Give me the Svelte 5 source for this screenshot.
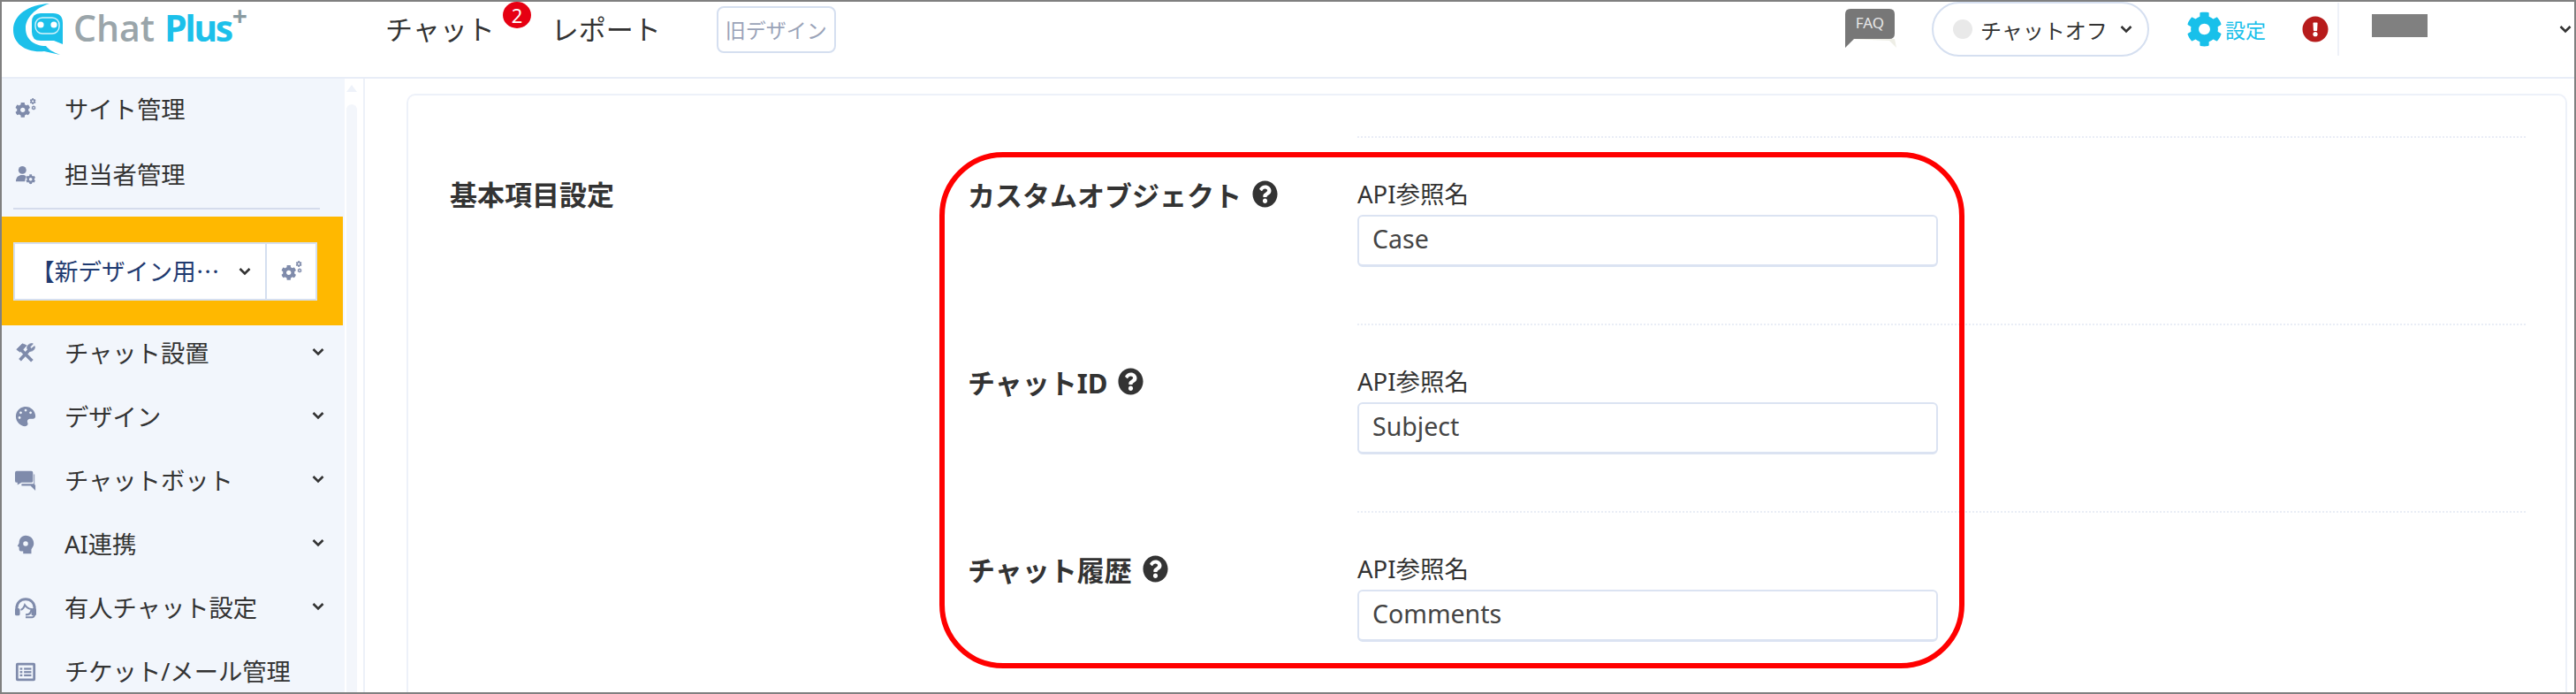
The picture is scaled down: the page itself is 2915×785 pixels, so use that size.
<script>
	const topItems = [
		{ label: 'サイト管理', icon: 'cogs' },
		{ label: '担当者管理', icon: 'usercog' }
	];
	const menuItems = [
		{ label: 'チャット設置', icon: 'tools', caret: true },
		{ label: 'デザイン', icon: 'palette', caret: true },
		{ label: 'チャットボット', icon: 'comments', caret: true },
		{ label: 'AI連携', icon: 'head', caret: true },
		{ label: '有人チャット設定', icon: 'agent', caret: true },
		{ label: 'チケット/メール管理', icon: 'list', caret: false }
	];
	const fields = [
		{ label: 'カスタムオブジェクト', value: 'Case' },
		{ label: 'チャットID', value: 'Subject' },
		{ label: 'チャット履歴', value: 'Comments' }
	];
	const gear =
		'M487.4 315.7l-42.6-24.6c4.3-23.2 4.3-47 0-70.2l42.6-24.6c4.9-2.8 7.1-8.6 5.5-14-11.1-35.6-30-67.8-54.7-94.6-3.8-4.1-10-5.1-14.8-2.3L380.8 110c-17.9-15.4-38.5-27.3-60.8-35.1V25.8c0-5.6-3.9-10.5-9.4-11.7-36.7-8.2-74.3-7.8-109.2 0-5.5 1.2-9.4 6.1-9.4 11.7V75c-22.2 7.9-42.8 19.8-60.8 35.1L88.7 85.5c-4.9-2.8-11-1.9-14.8 2.3-24.7 26.7-43.6 58.9-54.7 94.6-1.7 5.4.6 11.2 5.5 14L67.3 221c-4.3 23.2-4.3 47 0 70.2l-42.6 24.6c-4.9 2.8-7.1 8.6-5.5 14 11.1 35.6 30 67.8 54.7 94.6 3.8 4.1 10 5.1 14.8 2.3l42.6-24.6c17.9 15.4 38.5 27.3 60.8 35.1v49.2c0 5.6 3.9 10.5 9.4 11.7 36.7 8.2 74.3 7.8 109.2 0 5.5-1.2 9.4-6.1 9.4-11.7v-49.2c22.2-7.9 42.8-19.8 60.8-35.1l42.6 24.6c4.9 2.8 11 1.9 14.8-2.3 24.7-26.7 43.6-58.9 54.7-94.6 1.5-5.5-.7-11.3-5.6-14.1zM256 336c-44.1 0-80-35.9-80-80s35.9-80 80-80 80 35.9 80 80-35.9 80-80 80z';
	const help =
		'M504 256c0 136.997-111.043 248-248 248S8 392.997 8 256C8 119.083 119.043 8 256 8s248 111.083 248 248zM262.655 90c-54.497 0-89.255 22.957-116.549 63.758-3.536 5.286-2.353 12.415 2.715 16.258l34.699 26.31c5.205 3.947 12.621 3.008 16.665-2.122 17.864-22.658 30.113-35.797 57.303-35.797 20.429 0 45.698 13.148 45.698 32.958 0 14.976-12.363 22.667-32.534 33.976C247.128 238.528 216 254.941 216 296v4c0 6.627 5.373 12 12 12h56c6.627 0 12-5.373 12-12v-1.333c0-28.462 83.186-29.647 83.186-106.667 0-58.002-60.165-102-116.531-102zM256 338c-25.365 0-46 20.635-46 46 0 25.364 20.635 46 46 46s46-20.636 46-46c0-25.365-20.635-46-46-46z';
	const alert =
		'M504 256c0 136.997-111.043 248-248 248S8 392.997 8 256C8 119.083 119.043 8 256 8s248 111.083 248 248zm-248 50c-25.405 0-46 20.595-46 46s20.595 46 46 46 46-20.595 46-46-20.595-46-46-46zm-43.673-165.346l7.418 136c.347 6.364 5.609 11.346 11.982 11.346h48.546c6.373 0 11.635-4.982 11.982-11.346l7.418-136c.375-6.874-5.098-12.654-11.982-12.654h-63.383c-6.884 0-12.356 5.78-11.981 12.654z';
	const palette =
		'M204.3 5C104.9 24.4 24.8 104.3 5.2 203.4c-37 187 131.7 326.4 258.8 306.7 41.2-6.4 61.4-54.6 42.5-91.7-23.1-45.4 9.9-98.4 60.9-98.4h79.7c35.8 0 64.8-29.6 64.9-65.3C511.5 97.1 368.1-26.9 204.3 5zM96 320c-17.7 0-32-14.3-32-32s14.3-32 32-32 32 14.3 32 32-14.3 32-32 32zm32-128c-17.7 0-32-14.3-32-32s14.3-32 32-32 32 14.3 32 32-14.3 32-32 32zm128-64c-17.7 0-32-14.3-32-32s14.3-32 32-32 32 14.3 32 32-14.3 32-32 32zm128 64c-17.7 0-32-14.3-32-32s14.3-32 32-32 32 14.3 32 32-14.3 32-32 32z';
</script>

{#snippet chevron()}
	<svg class="chevron" viewBox="0 0 14 10" aria-hidden="true">
		<path d="M1.5 2 L7 7.5 L12.5 2" fill="none" stroke="#333" stroke-width="2.6" />
	</svg>
{/snippet}

{#snippet menuIcon(name)}
	<svg class="menu-icon" viewBox="0 0 26 26" aria-hidden="true">
		{#if name === 'cogs'}
			<g fill="#7f8bab">
				<path transform="translate(0 5) scale(0.037)" d={gear} />
				<path transform="translate(18 0) scale(0.015)" d={gear} />
				<path transform="translate(20 9) scale(0.011)" d={gear} />
			</g>
		{:else if name === 'usercog'}
			<g fill="#7f8bab">
				<circle cx="9" cy="8" r="4.8" />
				<path d="M1 22 C1 16 5 14 9 14 C11 14 12.5 14.5 13.5 15.5 L12 22 Z" />
				<path transform="translate(13 13) scale(0.024)" d={gear} />
			</g>
		{:else if name === 'tools'}
			<g fill="none" stroke="#7f8bab">
				<path d="M6 8 L21 23" stroke-width="4" />
				<path d="M2 9 L9 2 L14 4 L9 10 L6 12 Z" fill="#7f8bab" stroke-width="1" />
				<path d="M6 22 L18 9" stroke-width="4" />
				<path d="M15 8 C14 4 18 1 22 2 L18.5 6 L20 8 L24 5 C25 9 21 12 17 11 Z" fill="#7f8bab" stroke-width="1" />
			</g>
		{:else if name === 'palette'}
			<path transform="translate(1 1) scale(0.047)" d={palette} fill="#7f8bab" />
		{:else if name === 'comments'}
			<g fill="#7f8bab">
				<path d="M2 2 H20 Q22 2 22 4 V14 Q22 16 20 16 H8 L3 19 V16 H2 Q0 16 0 14 V4 Q0 2 2 2 Z" />
				<path d="M24 6 V19 H25 V26 L19 20 H8 V17.5 H23 V6 Z" />
			</g>
		{:else if name === 'head'}
			<path
				fill="#7f8bab"
				fill-rule="evenodd"
				d="M13 2 C19 2 23 6 23 12 C23 15 21 17 20 19 V24 H10 V21 H7 Q5 21 5 19 V16 L3 15 L5 11 C5 6 8 2 13 2 Z M13 9 A3 3 0 1 0 13 15 A3 3 0 1 0 13 9 Z"
			/>
		{:else if name === 'agent'}
			<g fill="none" stroke="#7f8bab" stroke-width="3.2">
				<path d="M2 18 V13 C2 6 7 2 13 2 C19 2 24 6 24 13 V18" />
				<path d="M7 15 C10 14 11 12 12 9 C14 12 17 14 20 14 C20 19 17 21 13 21" stroke-width="2.2" />
				<path d="M13 24 H21 Q24 24 24 19" stroke-width="2.2" />
			</g>
			<rect x="0" y="13" width="6" height="9" rx="2" fill="#7f8bab" />
			<rect x="20" y="13" width="6" height="9" rx="2" fill="#7f8bab" />
		{:else}
			<g fill="#7f8bab">
				<path fill-rule="evenodd" d="M3 2 H23 Q25 2 25 4 V22 Q25 24 23 24 H3 Q1 24 1 22 V4 Q1 2 3 2 Z M4 5 V21 H22 V5 Z" />
				<rect x="6" y="8" width="3" height="2.4" />
				<rect x="11" y="8" width="9" height="2.4" />
				<rect x="6" y="12" width="3" height="2.4" />
				<rect x="11" y="12" width="9" height="2.4" />
				<rect x="6" y="16" width="3" height="2.4" />
				<rect x="11" y="16" width="9" height="2.4" />
			</g>
		{/if}
	</svg>
{/snippet}

<div class="window">
	<header>
		<div class="logo">
			<svg class="logo-mark" viewBox="14 2 58 62" aria-hidden="true">
				<path fill="#1cc0ea" d="M56 4 C32 5 15 17 15 34 C15 50 30 60 50 58 L68 62 C60 59 55 56 52 52 C38 52 29 44 29 32 C29 20 40 9 56 4 Z" />
				<path fill="#1cc0ea" d="M46 15 H60 Q71 15 71 26 V50 L61 46 H46 Q36 46 36 36 V25 Q36 15 46 15 Z" />
				<rect x="40" y="20" width="27" height="18" rx="8" fill="none" stroke="#d6f3fb" stroke-width="1.4" />
				<circle cx="46" cy="28" r="3.6" fill="#fff" />
				<circle cx="61" cy="28" r="3.6" fill="#fff" />
			</svg>
			<div class="logo-text">
				<span class="logo-chat">Chat</span>
				<span class="logo-plus">Plus</span>
				<span class="logo-sup">+</span>
			</div>
		</div>

		<nav>
			<span class="nav-item">チャット<span class="badge">2</span></span>
			<span class="nav-item">レポート</span>
		</nav>
		<button class="old-design">旧デザイン</button>

		<div class="header-right">
			<div class="faq">
				<svg viewBox="0 0 58 44" aria-hidden="true">
					<path d="M4 34 H56 L58 44 L50 36 Z" fill="#eeeee6" />
					<path d="M6 0 H50 Q56 0 56 6 V28 Q56 34 50 34 H10 L0 44 V6 Q0 0 6 0 Z" fill="#777" />
				</svg>
				<span>FAQ</span>
			</div>
			<div class="status-pill">
				<span class="status-dot"></span>
				<span>チャットオフ</span>
				{@render chevron()}
			</div>
			<div class="settings">
				<svg viewBox="0 0 512 512" preserveAspectRatio="none" aria-hidden="true"><path fill="#18c0ea" d={gear} /></svg>
				<span>設定</span>
			</div>
			<svg class="alert" viewBox="0 0 512 512" preserveAspectRatio="none" aria-hidden="true">
				<circle cx="256" cy="256" r="200" fill="#fff" />
				<path fill="#b71c1c" d={alert} />
			</svg>
			<div class="account">
				<span class="account-mask"></span>
				{@render chevron()}
			</div>
		</div>
	</header>

	<div class="body">
		<aside>
			<ul class="top-menu">
				{#each topItems as item}
					<li class="menu-item">
						{@render menuIcon(item.icon)}
						<span>{item.label}</span>
					</li>
				{/each}
			</ul>
			<hr />
			<div class="site-bar">
				<div class="site-select">
					<div class="site-name">
						<span>【新デザイン用チャットプラス</span>
						{@render chevron()}
					</div>
					<div class="site-gear">{@render menuIcon('cogs')}</div>
				</div>
			</div>
			<ul class="main-menu">
				{#each menuItems as item}
					<li class="menu-item">
						{@render menuIcon(item.icon)}
						<span>{item.label}</span>
						{#if item.caret}
							<span class="caret">{@render chevron()}</span>
						{/if}
					</li>
				{/each}
			</ul>
		</aside>

		<div class="scrollbar">
			<span class="scroll-up"></span>
			<span class="scroll-track"></span>
		</div>

		<main>
			<section class="card">
				<h2>基本項目設定</h2>
				<div class="rows">
					{#each fields as field}
						<div class="row">
							<div class="row-label">
								<span>{field.label}</span>
								<svg viewBox="0 0 512 512" preserveAspectRatio="none" aria-hidden="true"><path fill="#333" d={help} /></svg>
							</div>
							<div class="row-field">
								<label>
									<span>API参照名</span>
									<input type="text" value={field.value} readonly />
								</label>
							</div>
						</div>
					{/each}
				</div>
			</section>
		</main>
	</div>

	<div class="highlight"></div>
</div>

<style>
	:global(body) {
		margin: 0;
		background: #fff;
	}

	.window {
		position: relative;
		box-sizing: border-box;
		width: 2915px;
		height: 785px;
		border: 2px solid #808080;
		overflow: hidden;
		display: flex;
		flex-direction: column;
		font-family: 'Noto Sans', 'Noto Sans CJK JP', sans-serif;
		color: #333;
		background: #fff;
	}

	header {
		flex: none;
		display: flex;
		align-items: center;
		height: 62px;
		padding: 0 0 23px 12px;
		border-bottom: 2px solid #e8edf7;
	}

	.logo {
		display: flex;
		align-items: flex-start;
		width: 273px;
		height: 62px;
	}

	.logo-mark {
		width: 58px;
		height: 62px;
	}

	.logo-text {
		display: flex;
		margin: 1px 0 0 11px;
		font-family: 'Open Sans', sans-serif;
		font-size: 41px;
		line-height: 56px;
	}

	.logo-chat {
		color: #9aa5aa;
		font-weight: 600;
		margin-right: 11px;
	}

	.logo-plus {
		color: #1cc0ea;
		font-weight: 700;
		letter-spacing: -2.5px;
	}

	.logo-sup {
		color: #8a9a9f;
		font-size: 30px;
		font-weight: 700;
		line-height: 30px;
		margin-left: 1px;
	}

	nav {
		display: flex;
		gap: 64px;
		margin-left: 149px;
	}

	.nav-item {
		position: relative;
		font-size: 31px;
		line-height: 44px;
	}

	.badge {
		position: absolute;
		left: 133px;
		top: -9px;
		width: 32px;
		height: 30px;
		border-radius: 50%;
		background: #e60012;
		color: #fff;
		font-size: 22px;
		line-height: 30px;
		text-align: center;
	}

	.old-design {
		box-sizing: border-box;
		width: 135px;
		height: 53px;
		margin-left: 63px;
		padding: 0;
		border: 2px solid #d5dff0;
		border-radius: 8px;
		background: #fff;
		color: #9aa3b8;
		font-family: inherit;
		font-size: 23px;
	}

	.header-right {
		display: flex;
		align-items: center;
		margin-left: auto;
	}

	.faq {
		position: relative;
		width: 58px;
		height: 44px;
		margin-bottom: 2px;
	}

	.faq svg {
		display: block;
		width: 58px;
		height: 44px;
	}

	.faq span {
		position: absolute;
		left: 0;
		right: 2px;
		top: 4px;
		color: #e8e8e8;
		font-size: 17px;
		line-height: 24px;
		text-align: center;
	}

	.status-pill {
		box-sizing: border-box;
		display: flex;
		align-items: center;
		width: 246px;
		height: 62px;
		margin-left: 40px;
		padding-left: 22px;
		border: 2px solid #d5dff0;
		border-radius: 31px;
		font-size: 24px;
	}

	.status-dot {
		width: 22px;
		height: 22px;
		margin-right: 9px;
		border-radius: 50%;
		background: #e9e9e9;
	}

	.status-pill .chevron {
		margin-left: 14px;
	}

	.settings {
		display: flex;
		align-items: center;
		gap: 3px;
		margin-left: 42px;
		color: #18c0ea;
		font-size: 23px;
	}

	.settings svg {
		width: 41px;
		height: 40px;
	}

	.alert {
		width: 30px;
		height: 30px;
		margin-left: 41px;
	}

	.account {
		display: flex;
		align-items: center;
		width: 268px;
		height: 60px;
		margin-left: 10px;
		padding-left: 37px;
		box-sizing: border-box;
		border-left: 2px solid #eef1f8;
	}

	.account-mask {
		width: 63px;
		height: 26px;
		margin-bottom: 8px;
		background: #808080;
	}

	.account .chevron {
		margin-left: auto;
		margin-right: 3px;
	}

	.chevron {
		flex: none;
		width: 14px;
		height: 10px;
	}

	.body {
		flex: 1;
		display: flex;
		min-height: 0;
	}

	aside {
		flex: none;
		width: 388px;
		background: #f2f6fc;
	}

	ul {
		margin: 0;
		padding: 0;
		list-style: none;
	}

	.top-menu {
		display: flex;
		flex-direction: column;
		gap: 12px;
		padding-top: 3px;
	}

	.main-menu {
		display: flex;
		flex-direction: column;
		gap: 10.2px;
	}

	.menu-item {
		display: flex;
		align-items: center;
		box-sizing: border-box;
		height: 62px;
		padding: 0 23px 0 15px;
		font-size: 27.3px;
		white-space: nowrap;
	}

	.menu-item > span {
		margin-top: -3px;
	}

	.menu-icon {
		flex: none;
		width: 24px;
		height: 24px;
		margin-right: 32px;
	}

	.caret {
		display: flex;
		margin-left: auto;
	}

	hr {
		height: 2px;
		margin: 7px 28px 8px 13px;
		border: 0;
		background: #d5dcec;
	}

	.site-bar {
		box-sizing: border-box;
		width: 386px;
		height: 123px;
		padding: 29px 0 0 13px;
		background: #ffb800;
	}

	.site-select {
		box-sizing: border-box;
		display: flex;
		width: 344px;
		height: 66px;
		border: 2px solid #d5dff0;
		background: #fff;
	}

	.site-name {
		flex: 1;
		display: flex;
		align-items: center;
		min-width: 0;
		padding: 0 16px 0 18px;
		color: #1f3a70;
		font-family: 'Noto Sans CJK JP', sans-serif;
		font-size: 26.7px;
	}

	.site-name span {
		flex: 1;
		min-width: 0;
		overflow: hidden;
		text-overflow: ellipsis;
		white-space: nowrap;
		margin-top: -3px;
	}

	.site-name .chevron {
		margin-left: 12px;
	}

	.site-gear {
		flex: none;
		display: flex;
		align-items: center;
		justify-content: center;
		width: 55px;
		border-left: 2px solid #d5dff0;
	}

	.site-gear .menu-icon {
		margin-right: 0;
	}

	.scrollbar {
		flex: none;
		box-sizing: border-box;
		display: flex;
		flex-direction: column;
		align-items: center;
		width: 23px;
		padding: 7px 5px 0 0;
		border-right: 2px solid #edf1f9;
	}

	.scroll-up {
		width: 0;
		height: 0;
		border-left: 6px solid transparent;
		border-right: 6px solid transparent;
		border-bottom: 8px solid #eef2f9;
	}

	.scroll-track {
		width: 12px;
		flex: 1;
		margin-top: 14px;
		border-radius: 6px 6px 0 0;
		background: #f3f6fb;
	}

	main {
		flex: 1;
		min-width: 0;
		padding: 17px 8px 0 47px;
	}

	.card {
		box-sizing: border-box;
		display: flex;
		height: 100%;
		padding: 46px 0 0 47px;
		border: 2px solid #edf1f9;
		border-bottom: 0;
		border-radius: 10px 10px 0 0;
	}

	h2 {
		flex: none;
		width: 586px;
		margin: 46px 0 0;
		font-size: 31px;
		font-weight: 700;
		line-height: 40px;
	}

	.rows {
		width: 1763px;
	}

	.row {
		display: flex;
		height: 212px;
	}

	.row-label {
		flex: none;
		display: flex;
		align-items: center;
		gap: 12px;
		width: 441px;
		height: 40px;
		margin-top: 45px;
		font-size: 31px;
		font-weight: 700;
	}

	.row-label svg {
		width: 29px;
		height: 31px;
	}

	.row-field {
		flex: 1;
		padding-top: 44px;
		border-top: 2px dotted #e9edf6;
	}

	label {
		display: flex;
		flex-direction: column;
		width: 657px;
		font-size: 27.5px;
		line-height: 40px;
	}

	input {
		box-sizing: border-box;
		width: 100%;
		height: 59px;
		margin-top: 3px;
		padding: 0 15px 4px;
		border: 2px solid #dbe3f2;
		border-bottom-width: 3px;
		border-radius: 6px;
		outline: none;
		color: #444;
		font-family: inherit;
		font-size: 28.5px;
	}

	.highlight {
		position: absolute;
		left: 1061px;
		top: 170px;
		box-sizing: border-box;
		width: 1160px;
		height: 584px;
		border: 6px solid #f00;
		border-radius: 72px;
		pointer-events: none;
	}
</style>
